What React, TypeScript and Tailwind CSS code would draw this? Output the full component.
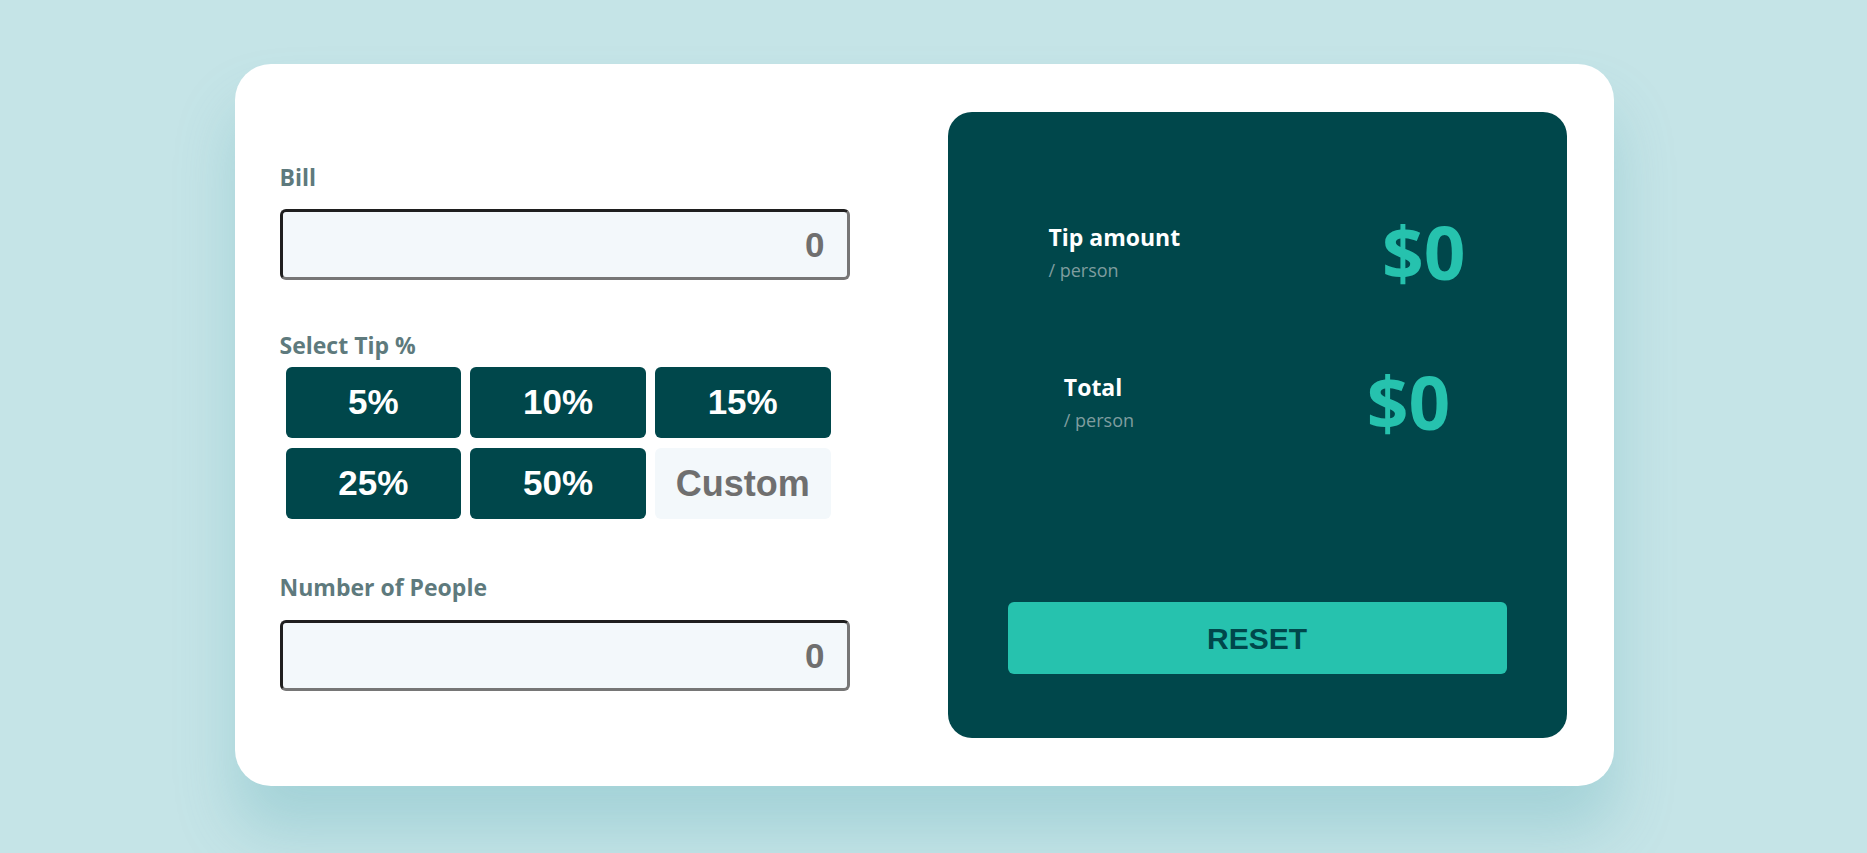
import React from "react";

const tips = ["5%", "10%", "15%", "25%", "50%"];

const Label = ({ children }: { children: React.ReactNode }) => (
  <label className="block font-['Open_Sans',sans-serif] text-[23px] font-bold leading-[32px] text-[#5e7a7d]">
    {children}
  </label>
);

const NumberInput = () => (
  <input
    readOnly
    placeholder="0"
    className="block h-[71px] w-full rounded-[6px] border-[3px] border-t-[#1f1f1f] border-l-[#1f1f1f] border-r-[#767676] border-b-[#767676] bg-[#f3f8fb] pr-[22px] text-right font-['Liberation_Sans',Arial,sans-serif] text-[35px] font-bold text-[#6f6f6f] outline-none placeholder:text-[#6f6f6f]"
  />
);

const ResultRow = ({ title }: { title: string }) => (
  <div className="flex items-center justify-around">
    <div className="font-['Open_Sans',sans-serif]">
      <div className="text-[23px] font-bold leading-[30px] text-white">{title}</div>
      <div className="mt-[5px] text-[18px] font-normal leading-[26px] text-[#7f9d9f]">/ person</div>
    </div>
    <div className="font-['Open_Sans',sans-serif] text-[73px] font-bold leading-[74px] text-[#26c2ae]">
      $0
    </div>
  </div>
);

export default function App() {
  return (
    <div className="flex min-h-screen justify-center bg-[#c5e4e7] pr-[19px] pt-[64px]">
      <div className="flex h-[722px] w-[1379px] justify-between rounded-[36px] bg-white py-12 pl-[45px] pr-[47px] shadow-[0_45px_60px_rgba(79,166,175,0.28)]">
        {/* Inputs */}
        <div className="w-[570px] pt-[49px]">
          <Label>Bill</Label>
          <div className="mt-4">
            <NumberInput />
          </div>

          <div className="mt-[49px]">
            <Label>Select Tip %</Label>
          </div>
          <div className="ml-[6px] mt-[6px] grid w-[545px] grid-cols-3 gap-x-[9px] gap-y-[10px]">
            {tips.map((t) => (
              <button
                key={t}
                className="flex h-[71px] items-center justify-center rounded-[6px] bg-[#00474b] font-['Liberation_Sans',Arial,sans-serif] text-[35px] font-bold text-white"
              >
                {t}
              </button>
            ))}
            <div className="flex h-[71px] items-center justify-center rounded-[6px] bg-[#f3f8fb] font-['Liberation_Sans',Arial,sans-serif] text-[36px] font-bold text-[#6f6f6f]">
              Custom
            </div>
          </div>

          <div className="mt-[52px]">
            <Label>Number of People</Label>
          </div>
          <div className="mt-[17px]">
            <NumberInput />
          </div>
        </div>

        {/* Results */}
        <div className="flex w-[619px] flex-col rounded-3xl bg-[#00474b] pt-[103px] pb-16">
          <ResultRow title="Tip amount" />
          <div className="mt-[76px]">
            <ResultRow title="Total" />
          </div>
          <button className="mx-[60px] mt-auto h-[72px] rounded-[6px] bg-[#26c2ae] font-['Liberation_Sans',Arial,sans-serif] text-[30px] font-bold text-[#00474b]">
            RESET
          </button>
        </div>
      </div>
    </div>
  );
}
